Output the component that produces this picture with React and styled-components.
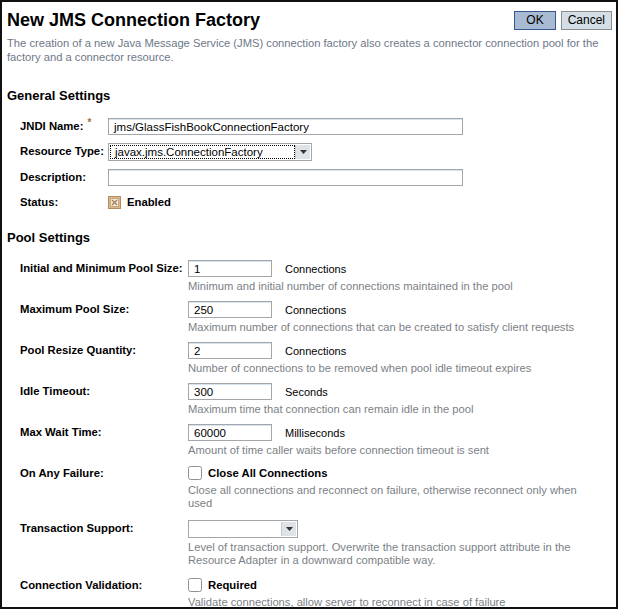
import React from "react";
import styled, { createGlobalStyle } from "styled-components";

const GlobalStyle = createGlobalStyle`
  html, body {
    margin: 0;
    padding: 0;
    background: #ffffff;
  }
  body {
    font-family: "Liberation Sans", Arial, sans-serif;
    font-size: 12px;
    color: #000;
  }
`;

const Frame = styled.div`
  box-sizing: border-box;
  width: 618px;
  height: 609px;
  border: 2px solid #111;
  overflow: hidden;
  padding: 0 0 0 5px;
`;

const TitleBar = styled.div`
  display: flex;
  justify-content: space-between;
  align-items: flex-start;
  padding: 7px 4px 0 0;
`;

const Title = styled.h1`
  margin: 0;
  font-size: 18px;
  line-height: 22px;
  font-weight: bold;
`;

const Buttons = styled.div`
  display: flex;
  gap: 5px;
  padding-top: 2px;
`;

const Button = styled.button`
  font-family: "Liberation Sans", Arial, sans-serif;
  font-size: 12px;
  height: 19px;
  padding: 0 ${(p) => (p.$primary ? "11px" : "6px")};
  border: 1px solid ${(p) => (p.$primary ? "#36588e" : "#8c8c8c")};
  background: ${(p) => (p.$primary ? "#a9bad3" : "#d3dee6")};
  color: #000;
  border-radius: 0;
  line-height: 17px;
`;

const Intro = styled.p`
  margin: 5px 0 0 0;
  color: #6d7888;
  font-size: 11.2px;
  line-height: 14px;
  width: 606px;
`;

const SectionTitle = styled.h2`
  margin: ${(p) => p.$top}px 0 0 0;
  font-size: 13px;
  line-height: 16px;
  font-weight: bold;
`;

const Rows = styled.div`
  display: grid;
  grid-template-columns: ${(p) => p.$labelWidth}px 1fr;
  row-gap: 8px;
  padding-left: 13px;
  margin-top: ${(p) => p.$top}px;
`;

const Label = styled.div`
  font-weight: bold;
  font-size: 11.3px;
  line-height: 16px;
  padding-top: ${(p) => p.$pt || 0}px;
`;

const Star = styled.sup`
  color: #a07040;
  font-size: 10px;
  margin-left: 4px;
  vertical-align: 4px;
  line-height: 0;
`;

const Field = styled.div`
  display: flex;
  flex-direction: column;
  margin-top: ${(p) => p.$mt || 0}px;
`;

const Line = styled.div`
  display: flex;
  align-items: center;
  gap: 13px;
  height: 17px;
`;

const TextInput = styled.div`
  box-sizing: border-box;
  width: ${(p) => p.$w}px;
  height: 17px;
  border: 1px solid #a3a7ab;
  box-shadow: inset 0 1px 0 #d6e4f0;
  padding: 0 0 0 5px;
  font-size: 11.5px;
  line-height: 16px;
  background: #fff;
  white-space: nowrap;
  overflow: hidden;
`;

const Select = styled.div`
  box-sizing: border-box;
  width: ${(p) => p.$w}px;
  height: 18px;
  border: 1px solid #a3a7ab;
  display: flex;
  background: #fff;
  padding: 1px;
`;

const SelectValue = styled.div`
  flex: 1;
  border: ${(p) => (p.$focused ? "1px dotted #000" : "1px solid transparent")};
  padding-left: 4px;
  font-size: 11.5px;
  line-height: 13px;
  white-space: nowrap;
  overflow: hidden;
`;

const SelectArrow = styled.div`
  width: 14px;
  background: #dfe3e6;
  display: flex;
  align-items: center;
  justify-content: center;
  border-left: 1px solid #c8ccd0;
`;

const Unit = styled.span`
  font-size: 11px;
`;

const Help = styled.div`
  color: #7b7f86;
  font-size: 11.2px;
  line-height: 13px;
  margin-top: 3px;
  width: 398px;
`;

const Check = styled.label`
  display: flex;
  align-items: center;
  gap: 6px;
  font-weight: bold;
  font-size: 11.3px;
  height: 16px;
`;

const Arrow = () => (
  <svg width="7" height="4" viewBox="0 0 7 4">
    <path d="M0 0h7L3.5 4z" fill="#333" />
  </svg>
);

const CheckedBox = () => (
  <svg width="13" height="13" viewBox="0 0 13 13">
    <rect x="0.5" y="0.5" width="12" height="12" fill="#d9b98e" stroke="#b58d5c" />
    <rect x="2.5" y="2.5" width="8" height="8" fill="#f3ece2" stroke="#c9a67a" />
    <path d="M4 4l5 5M9 4l-5 5" stroke="#9c7a52" strokeWidth="1.2" />
  </svg>
);

const EmptyBox = () => (
  <svg width="14" height="14" viewBox="0 0 14 14">
    <rect x="0.5" y="0.5" width="13" height="13" rx="2" fill="#fff" stroke="#8e9296" />
  </svg>
);

const pool = [
  ["Initial and Minimum Pool Size:", "1", "Connections", "Minimum and initial number of connections maintained in the pool"],
  ["Maximum Pool Size:", "250", "Connections", "Maximum number of connections that can be created to satisfy client requests"],
  ["Pool Resize Quantity:", "2", "Connections", "Number of connections to be removed when pool idle timeout expires"],
  ["Idle Timeout:", "300", "Seconds", "Maximum time that connection can remain idle in the pool"],
  ["Max Wait Time:", "60000", "Milliseconds", "Amount of time caller waits before connection timeout is sent"],
];

export default function App() {
  return (
    <>
      <GlobalStyle />
      <Frame>
        <TitleBar>
          <Title>New JMS Connection Factory</Title>
          <Buttons>
            <Button $primary>OK</Button>
            <Button>Cancel</Button>
          </Buttons>
        </TitleBar>
        <Intro>
          The creation of a new Java Message Service (JMS) connection factory also creates a connector connection pool for the
          factory and a connector resource.
        </Intro>

        <SectionTitle $top={24}>General Settings</SectionTitle>
        <Rows $labelWidth={88} $top={14}>
          <Label>
            JNDI Name:<Star>*</Star>
          </Label>
          <Field>
            <TextInput $w={355}>jms/GlassFishBookConnectionFactory</TextInput>
          </Field>

          <Label>Resource Type:</Label>
          <Field>
            <Select $w={204}>
              <SelectValue $focused>javax.jms.ConnectionFactory</SelectValue>
              <SelectArrow>
                <Arrow />
              </SelectArrow>
            </Select>
          </Field>

          <Label>Description:</Label>
          <Field>
            <TextInput $w={355} />
          </Field>

          <Label>Status:</Label>
          <Field>
            <Check>
              <CheckedBox />
              Enabled
            </Check>
          </Field>
        </Rows>

        <SectionTitle $top={20}>Pool Settings</SectionTitle>
        <Rows $labelWidth={168} $top={14}>
          {pool.map(([label, value, unit, help]) => (
            <React.Fragment key={label}>
              <Label>{label}</Label>
              <Field>
                <Line>
                  <TextInput $w={84}>{value}</TextInput>
                  <Unit>{unit}</Unit>
                </Line>
                <Help>{help}</Help>
              </Field>
            </React.Fragment>
          ))}

          <Label>On Any Failure:</Label>
          <Field>
            <Check>
              <EmptyBox />
              Close All Connections
            </Check>
            <Help>Close all connections and reconnect on failure, otherwise reconnect only when used</Help>
          </Field>

          <Label $pt={2}>Transaction Support:</Label>
          <Field $mt={2}>
            <Select $w={110}>
              <SelectValue />
              <SelectArrow>
                <Arrow />
              </SelectArrow>
            </Select>
            <Help>
              Level of transaction support. Overwrite the transaction support attribute in the Resource Adapter in a
              downward compatible way.
            </Help>
          </Field>

          <Label $pt={2}>Connection Validation:</Label>
          <Field $mt={2}>
            <Check>
              <EmptyBox />
              Required
            </Check>
            <Help>Validate connections, allow server to reconnect in case of failure</Help>
          </Field>
        </Rows>
      </Frame>
    </>
  );
}
